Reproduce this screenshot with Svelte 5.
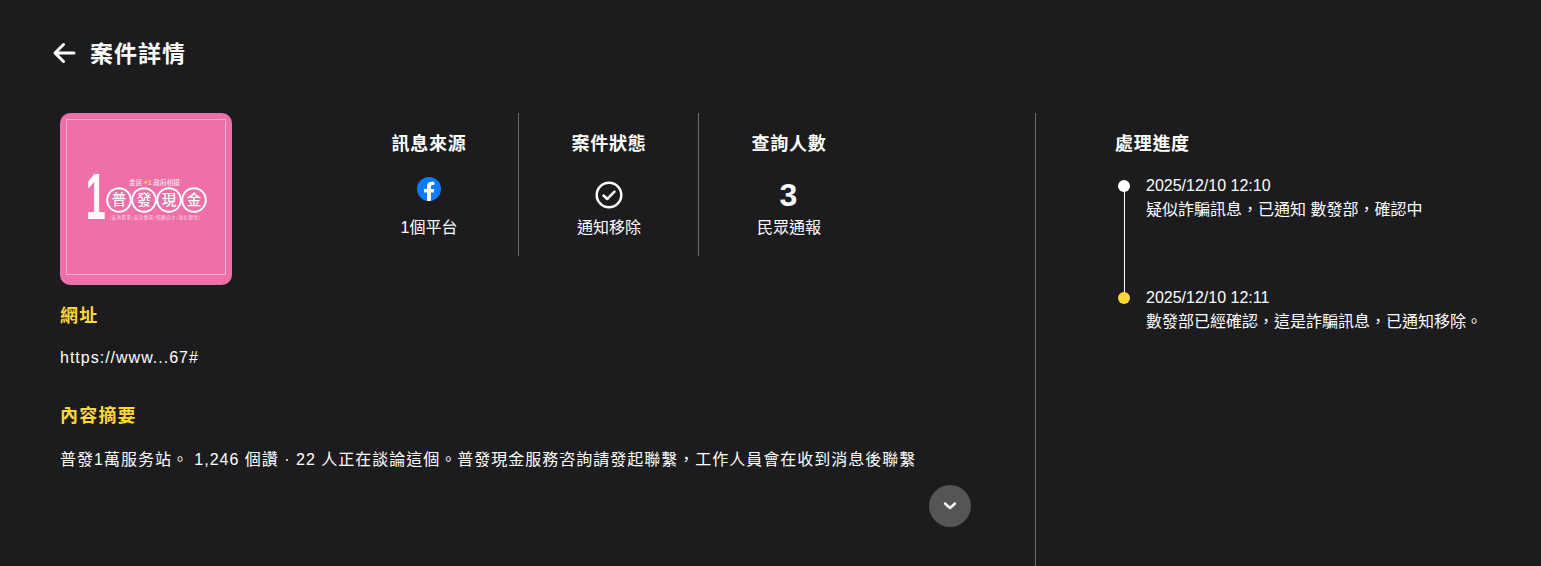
<script>
  const stats = [
    { title: '訊息來源', label: '1個平台', kind: 'fb' },
    { title: '案件狀態', label: '通知移除', kind: 'check' },
    { title: '查詢人數', label: '民眾通報', kind: 'num' }
  ];
  const timeline = [
    { time: '2025/12/10 12:10', text: '疑似詐騙訊息，已通知 數發部，確認中', done: false },
    { time: '2025/12/10 12:11', text: '數發部已經確認，這是詐騙訊息，已通知移除。', done: true }
  ];
  const seals = ['普', '發', '現', '金'];
  const tags = ['安消費業', '安全簡單', '照顧自主', '強化韌性'];
</script>

<div class="page">
  <header class="header">
    <svg class="back" width="24" height="24" viewBox="0 0 24 24">
      <path d="M22 12H3.500M11.500 3.500 3 12l8.500 8.500" fill="none" stroke="#fff" stroke-width="3" stroke-linecap="round" stroke-linejoin="round" />
    </svg>
    <h1>案件詳情</h1>
  </header>

  <div class="body">
    <section class="main">
      <div class="top">
        <div class="poster">
          <svg width="172" height="172" viewBox="0 0 172 172">
            <rect x="6.500" y="6.500" width="159" height="155" fill="none" stroke="#f7b5d3" stroke-width="1" />
            <text transform="translate(26 106) scale(.55 1)" class="one">1</text>
            <text x="94.500" y="72" class="slogan" text-anchor="middle">金民 <tspan class="plus">+1</tspan> 政府相挺</text>
            {#each seals as s, i}
              <circle cx={59 + i * 25} cy="87" r="11.800" fill="none" stroke="#fff" stroke-width="2" />
              <text x={59 + i * 25} y="92" class="seal" text-anchor="middle">{s}</text>
            {/each}
            <text x="95" y="106" class="tiny" text-anchor="middle">{#each tags as t}<tspan class="slash">/ </tspan>{t} {/each}<tspan class="slash">/</tspan></text>
          </svg>
        </div>

        <div class="stats">
          {#each stats as s}
            <div class="stat">
              <h2>{s.title}</h2>
              <div class="figure {s.kind}">
                {#if s.kind === 'fb'}
                  <svg width="24" height="24" viewBox="0 0 24 24">
                    <circle cx="12" cy="12" r="12" fill="#0a7cff" />
                    <path d="M16.700 15.500l.5-3.500h-3.300V9.800c0-1 .5-1.900 2-1.900h1.400V5c0 0-1.400-.2-2.700-.2-2.800 0-4.600 1.700-4.600 4.700V12H7v3.500h3v8.400c.6.1 1.300.1 2 .1s1.300 0 1.900-.1v-8.400z" fill="#fff" />
                  </svg>
                {:else if s.kind === 'check'}
                  <svg width="28" height="28" viewBox="0 0 28 28">
                    <circle cx="14" cy="14" r="12.300" fill="none" stroke="#fff" stroke-width="2.500" />
                    <path d="M8.500 14.500l3.700 3.500 7.300-7.300" fill="none" stroke="#fff" stroke-width="2.500" stroke-linecap="round" stroke-linejoin="round" />
                  </svg>
                {:else}
                  <span class="count">3</span>
                {/if}
              </div>
              <p>{s.label}</p>
            </div>
          {/each}
        </div>
      </div>

      <h3 class="url-title">網址</h3>
      <p class="text url">https://www...67#</p>
      <h3 class="summary-title">內容摘要</h3>
      <p class="text summary">普發1萬服务站。 1,246 個讚 · 22 人正在談論這個。普發現金服務咨詢請發起聯繫，工作人員會在收到消息後聯繫</p>

      <button class="more" aria-label="展開">
        <svg width="14" height="10" viewBox="0 0 14 10">
          <path d="M2 2.500l5 4.500 5-4.500" fill="none" stroke="#fff" stroke-width="2.400" stroke-linecap="round" stroke-linejoin="round" />
        </svg>
      </button>
    </section>

    <aside class="progress">
      <h2>處理進度</h2>
      <ol>
        {#each timeline as t}
          <li class:done={t.done}>
            <div>{t.time}</div>
            <div>{t.text}</div>
          </li>
        {/each}
      </ol>
    </aside>
  </div>
</div>

<style>
  :global(body) {
    margin: 0;
    background: #1c1c1e;
  }

  .page {
    height: 566px;
    overflow: hidden;
    background: #1c1c1e;
    color: #fff;
    font-family: "Liberation Sans", "Noto Sans CJK TC", sans-serif;
  }

  .header {
    display: flex;
    align-items: center;
    gap: 14px;
    height: 34px;
    padding: 35px 0 0 52px;
  }

  .back {
    flex: none;
    margin-top: 2px;
  }

  .header h1 {
    margin: 0;
    font-size: 23px;
    font-weight: 700;
    letter-spacing: 1px;
  }

  .body {
    display: flex;
    margin-top: 44px;
    padding-left: 60px;
  }

  .main {
    width: 975px;
    height: 453px;
    box-sizing: border-box;
    display: flex;
    flex-direction: column;
  }

  .top {
    display: flex;
    align-items: flex-start;
    height: 172px;
  }

  .poster {
    width: 172px;
    height: 172px;
    flex: none;
    border-radius: 10px;
    overflow: hidden;
    background: #ef6fa8;
  }

  .poster svg {
    display: block;
  }

  .one {
    font: 700 64px "Liberation Sans", sans-serif;
    fill: #fff;
  }

  .slogan {
    font: 500 6.700px "Noto Sans CJK TC", sans-serif;
    fill: #fde3ee;
  }

  .plus {
    fill: #ffe27a;
    font-weight: 700;
  }

  .seal {
    font: 500 14.500px "Noto Sans CJK TC", sans-serif;
    fill: #fff;
  }

  .tiny {
    font: 400 4.500px "Noto Sans CJK TC", sans-serif;
    fill: #fbdbe9;
    letter-spacing: 0.5px;
    word-spacing: 1px;
  }

  .slash {
    fill: #ffe27a;
  }

  .stats {
    display: flex;
    margin-left: 107px;
  }

  .stat {
    width: 179px;
    height: 143px;
    border-right: 1px solid #6b6b6d;
    display: flex;
    flex-direction: column;
    align-items: center;
  }

  .stat:last-child {
    border-right: 0;
  }

  .stat h2,
  .progress h2 {
    margin: 0;
    font-size: 18px;
    line-height: 24px;
    font-weight: 700;
    letter-spacing: 0.7px;
  }

  .stat h2 {
    margin-top: 19px;
    padding-left: 1px;
  }

  .figure {
    height: 57px;
    margin-top: 4px;
    box-sizing: border-box;
    display: flex;
    justify-content: center;
    align-items: flex-start;
  }

  .figure svg {
    display: block;
  }

  .figure.fb,
  .figure.num {
    padding-top: 17px;
  }

  .figure.check {
    padding-top: 21px;
  }

  .count {
    font-size: 32px;
    line-height: 36px;
    font-weight: 700;
  }

  .stat p {
    margin: 0;
    padding-left: 1px;
    font-size: 16px;
    line-height: 22px;
  }

  h3 {
    margin: 0;
    color: #fdd835;
    font-size: 18px;
    line-height: 24px;
    font-weight: 700;
    letter-spacing: 1.200px;
  }

  .url-title {
    margin-top: 19px;
  }

  .summary-title {
    margin-top: 34px;
  }

  .text {
    margin: 0;
    font-size: 16px;
    line-height: 24px;
    letter-spacing: 1px;
  }

  .url {
    margin-top: 18px;
  }

  .summary {
    margin-top: 20px;
  }

  .more {
    align-self: flex-end;
    margin: 13px 64px 0 0;
    width: 42px;
    height: 42px;
    padding: 0;
    border: 0;
    border-radius: 50%;
    background: #555556;
    display: flex;
    align-items: center;
    justify-content: center;
  }

  .progress {
    border-left: 1px solid #6b6b6d;
    padding: 19px 0 0 79px;
    height: 434px;
    flex: 1;
  }

  ol {
    list-style: none;
    margin: 18px 0 0;
    padding: 0;
  }

  li {
    position: relative;
    height: 112px;
    padding-left: 31px;
    font-size: 16px;
    line-height: 24px;
  }

  li::before {
    content: "";
    position: absolute;
    left: 3px;
    top: 6px;
    width: 12px;
    height: 12px;
    border-radius: 50%;
    background: #fff;
  }

  li:not(.done)::after {
    content: "";
    position: absolute;
    left: 9px;
    top: 12px;
    width: 1px;
    height: 112px;
    background: #fff;
  }

  li.done::before {
    background: #fdd835;
  }
</style>
